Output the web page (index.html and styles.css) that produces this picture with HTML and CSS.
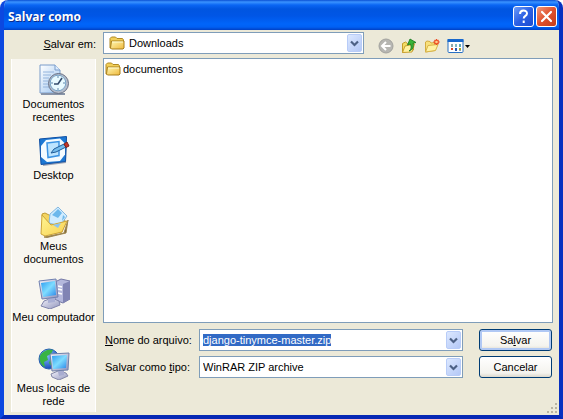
FILE: index.html
```html
<!DOCTYPE html>
<html lang="pt-BR">
<head>
<meta charset="utf-8">
<meta name="viewport" content="width=device-width, initial-scale=1">
<title>Salvar como</title>
<link rel="stylesheet" href="styles.css">
</head>
<body>
<svg class="defs" aria-hidden="true">
  <defs>
    <linearGradient id="gold" x1="0" y1="0" x2="1" y2="1"><stop offset="0" stop-color="#fff9b4"/><stop offset="1" stop-color="#efb83c"/></linearGradient>
    <linearGradient id="yellow" x1="0" y1="0" x2="1" y2="1"><stop offset="0" stop-color="#fff694"/><stop offset="1" stop-color="#f8d050"/></linearGradient>
    <linearGradient id="screen" x1="0" y1="0" x2="1" y2="1"><stop offset="0" stop-color="#2c9cf0"/><stop offset=".5" stop-color="#7fdcff"/><stop offset="1" stop-color="#2a86e8"/></linearGradient>
    <linearGradient id="metal" x1="0" y1="0" x2="1" y2="1"><stop offset="0" stop-color="#f4f4fc"/><stop offset="1" stop-color="#9094bc"/></linearGradient>
    <linearGradient id="paper" x1="0" y1="0" x2="1" y2="1"><stop offset="0" stop-color="#ffffff"/><stop offset="1" stop-color="#9cc4f0"/></linearGradient>
    <radialGradient id="globe" cx=".35" cy=".3" r=".8"><stop offset="0" stop-color="#8cc8ff"/><stop offset="1" stop-color="#0c3cb4"/></radialGradient>
    <symbol id="folder" viewBox="0 0 16 14">
      <path d="M1 12V2.500L2.500 1h4L8 2.500h5.500L14.500 4v8z" fill="#f2cf58" stroke="#b08a24"/>
      <path d="M2.500 5h12.500v7l-1 1H2.500L1.500 12z" fill="url(#gold)" stroke="#a87e1c"/>
      <path d="M3 6h11" stroke="#fffbd0"/>
    </symbol>
    <symbol id="chevron" viewBox="0 0 9 7">
      <path d="M1 1.500l3.500 3.500L8 1.500" fill="none" stroke="#4d6185" stroke-width="2.200"/>
    </symbol>
  </defs>
</svg>
<main class="dialog">
  <header class="titlebar">
    <h1>Salvar como</h1>
    <button class="caption help" type="button" aria-label="Ajuda"><svg viewBox="0 0 19 19"><path d="M6 7c0-4.500 7-4.500 7-.5 0 2.500-3.300 2.300-3.300 5M9.700 13.500v2.500" fill="none" stroke="#fff" stroke-width="2"/></svg></button>
    <button class="caption close" type="button" aria-label="Fechar"><svg viewBox="0 0 19 19"><path d="M5 5l9 9M14 5l-9 9" stroke="#fff" stroke-width="2.200" stroke-linecap="round"/></svg></button>
  </header>
  <form class="content">
    <label class="lookin" for="folder-select"><u>S</u>alvar em:</label>
    <div class="topline">
      <div class="combo location">
        <svg class="folder"><use href="#folder"/></svg>
        <select id="folder-select"><option>Downloads</option></select>
        <span class="arrow"><svg><use href="#chevron"/></svg></span>
      </div>
      <div class="tools">
        <button type="button" aria-label="Voltar"><svg width="16" height="16" viewBox="0 0 16 16"><circle cx="8" cy="8" r="7" fill="#b6b6b2" stroke="#a2a29e"/><path d="M12.500 8H4.500M8 4L4 8l4 4" fill="none" stroke="#fff" stroke-width="2"/></svg></button>
        <button type="button" aria-label="Um nível acima"><svg width="16" height="16" viewBox="0 0 16 16"><path d="M1.500 14.500V5.500l3-1.500 2 1.500 6-1.500v8z" fill="#f4dc64" stroke="#c49c28"/><path d="M1.500 14.500L4 8l9.500-2-2.500 8z" fill="#fff2a0" stroke="#c8a030"/><path d="M8 13c2.500-2 2.500-4 1.500-7L6.500 7 9 1l6 3.500-3 .8c1 3 0 6.700-4 7.700z" fill="#38b438" stroke="#14741c" stroke-width=".8"/></svg></button>
        <button type="button" aria-label="Criar nova pasta"><svg width="16" height="16" viewBox="0 0 16 16"><path d="M1.500 14V4l1.500-1 3 .5 1 1.500 4-.5v8z" fill="#f8e07c" stroke="#d4ac40"/><path d="M1.500 14L4 7.500l10-1-2.500 6z" fill="#fff2a4" stroke="#d8b448"/><path d="M12.500 1v6M9.500 4h6M10.500 2l4 4M14.500 2l-4 4" stroke="#ee4820" stroke-width="1.300"/><circle cx="12.500" cy="4" r="1.300" fill="#ffcc88"/></svg></button>
        <button type="button" aria-label="Menu Exibir"><svg width="23" height="16" viewBox="0 0 23 16"><rect x="1" y="1.500" width="15" height="13" rx="1" fill="#fff" stroke="#2870c4"/><path d="M.5 1h16v3H.5z" fill="#1868cc"/><path d="M4 6h2v3H4zM12 10h2v3h-2z" fill="#90a8a8"/><path d="M8 6h2v3H8z" fill="#80b8c0"/><path d="M12 6h2v3h-2z" fill="#60a8b0"/><path d="M4 10h2v2H4z" fill="#d84828"/><path d="M8 10h2v3H8z" fill="#2858b0"/><path d="M12 10h2v2h-2z" fill="#a8a828"/><path d="M18 7h5l-2.500 3z" fill="#000"/></svg></button>
      </div>
    </div>
    <nav class="places">
      <button type="button">
        <svg viewBox="0 0 32 32"><path d="M2 1h15l5 5v23H2z" fill="url(#paper)" stroke="#7b9cca"/><path d="M17 1v5h5" fill="#dcecff" stroke="#7b9cca"/><path d="M5 8h11M5 11h8M5 14h6M5 17h5M5 20h5M5 23h6" stroke="#94b4dc"/><path d="M3 30h24" stroke="#8894a8" stroke-width="2"/><circle cx="20.500" cy="19.500" r="10" fill="#b4bccc" stroke="#667084"/><circle cx="20" cy="19" r="7.800" fill="#e8faff" stroke="#78a4c8"/><path d="M20 12v2M20 24v2M13 19h2M25 19h2" stroke="#6088ac"/><path d="M24 14l-4 6h-4" fill="none" stroke="#344c6c" stroke-width="1.600"/></svg>
        <span>Documentos<br>recentes</span>
      </button>
      <button type="button">
        <svg viewBox="0 0 32 32"><path d="M4 4l25-2-1 26-23 3z" fill="#9ca4b4"/><path d="M1.500 4l27-2.500-1 25L3 29.500z" fill="#1c78d4" stroke="#1050a4"/><path d="M8 5l14-1.500 5 5v11l-5 6.500L9 27l-6-5V11z" fill="#f4fbff"/><path d="M9 8l12-1.500v14L10 22.500z" fill="#bce4ff" stroke="#3c94e4" stroke-width="1.500"/><path d="M13 18l3-4 10-5 2 3-10 5z" fill="#74bcec" stroke="#205c98"/><path d="M26 9l3-2 2 4-3 1.500z" fill="#c83428" stroke="#7c2018"/></svg>
        <span>Desktop</span>
      </button>
      <button type="button">
        <svg viewBox="0 0 32 32"><path d="M6 31l20-4 4-13-2 13-19 4.500z" fill="#786034" stroke="#a08850"/><path d="M4 8l3-1 6 3 12 0 2 5-3 11-18 3z" fill="#f4d460" stroke="#c09c34"/><path d="M12 8l8-7 9 9-7 10-11-3z" fill="#d0ecff" stroke="#84b8e0"/><path d="M14 9l6-6 4 4-4 5zM25 9l2 2-3 4" fill="#6cb8ec"/><path d="M4 9l9 10 16-4-5 11-17 4-4-2z" fill="url(#yellow)" stroke="#cca438"/><path d="M15 19l5 3 3-5z" fill="#8cc4f0"/></svg>
        <span>Meus<br>documentos</span>
      </button>
      <button type="button">
        <svg viewBox="0 0 32 32"><path d="M17 5l6-3 9 2v18l-7 4-8-3z" fill="#b4b8dc" stroke="#7478a4"/><path d="M25 7l7-3v18l-7 4z" fill="#8084b4"/><path d="M20 9l4 1M20 12l4 1M20 16l4 1" stroke="#fff" stroke-width="1.500"/><path d="M6 24l8-3 7 3 1 4-10 4-9-3z" fill="url(#metal)" stroke="#8084ac"/><path d="M10 18h7v7l-7 1z" fill="#a8aed4"/><path d="M1 4l17-2 2 18-16 2z" fill="url(#metal)" stroke="#7080b0"/><path d="M3 6l14-2 1 14-13 2z" fill="url(#screen)"/></svg>
        <span>Meu computador</span>
      </button>
      <button type="button">
        <svg viewBox="0 0 32 32"><circle cx="11" cy="11" r="10" fill="url(#globe)" stroke="#2860b0"/><path d="M2 8c3-6 9-7 13-6l-2 4-4 2 1 4-4 2 1 5c-4-2-6-6-5-11zM13 10l5-3 2 7-5 6-4-5z" fill="#38b444"/><path d="M13 26l7-3 8 2 2 3-9 4-7-3z" fill="url(#metal)" stroke="#8488a8"/><path d="M19 20h7v7l-5 1z" fill="#a8acd0"/><path d="M12 6l19-1-1 17-16 1z" fill="url(#metal)" stroke="#7080a8"/><path d="M14 8l15-1-1 13-13 1z" fill="url(#screen)"/></svg>
        <span>Meus locais de<br>rede</span>
      </button>
    </nav>
    <ul class="files">
      <li><svg class="folder"><use href="#folder"/></svg>documentos</li>
    </ul>
    <div class="fields">
      <label for="file-name"><u>N</u>ome do arquivo:</label>
      <div class="combo">
        <input id="file-name" type="text" value="django-tinymce-master.zip" spellcheck="false" autocomplete="off">
        <span class="arrow"><svg><use href="#chevron"/></svg></span>
      </div>
      <button class="action primary" type="submit">Sa<u>l</u>var</button>
      <label for="file-type">Salvar como <u>t</u>ipo:</label>
      <div class="combo">
        <select id="file-type"><option>WinRAR ZIP archive</option></select>
        <span class="arrow"><svg><use href="#chevron"/></svg></span>
      </div>
      <button class="action" type="button">Cancelar</button>
    </div>
  </form>
  <svg class="grip" viewBox="0 0 12 12" aria-hidden="true"><path d="M9 1h2v2H9zM5 5h2v2H5zM9 5h2v2H9zM1 9h2v2H1zM5 9h2v2H5zM9 9h2v2H9z" fill="#b8b4a2"/></svg>
</main>
<script src="script.js"></script>
</body>
</html>
```
FILE: styles.css
```css
* {
  box-sizing: border-box;
}

body {
  margin: 0;
  background: #fff;
  color: #000;
  font: 11px/13px "Liberation Sans", Arial, sans-serif;
}

button,
input,
select {
  margin: 0;
  padding: 0;
  border: 0;
  border-radius: 0;
  background: none;
  color: inherit;
  font: inherit;
  outline: 0;
}

svg {
  display: block;
  flex: none;
}

.defs {
  position: absolute;
  width: 0;
  height: 0;
}

.dialog {
  position: relative;
  display: flex;
  flex-direction: column;
  min-height: 100vh;
  border: solid #0c3fd8;
  border-width: 0 4px 4px;
  border-color: #0c3fd8 #0831c0 #0628b4 #0c48e0;
  border-radius: 8px 8px 0 0;
  background: #ece9d8;
  overflow: hidden;
}

.titlebar {
  display: flex;
  align-items: center;
  gap: 2px;
  height: 30px;
  margin: 0 -4px;
  padding: 3px 6px 0 8px;
  background: linear-gradient(#0a50d4 0, #3a93ff 2px, #0a66f4 5px, #0055e0 9px, #0056e6 16px, #0065fa 24px, #0060f4 27px, #0040c4 30px);
}

.titlebar h1 {
  flex: 1;
  margin: 0;
  color: #fff;
  font: bold 12px/16px "Open Sans", "Noto Sans", sans-serif;
  text-shadow: 1px 1px 0 #0c2c8c;
}

.caption {
  width: 21px;
  height: 21px;
  border: 1px solid #fff;
  border-radius: 3px;
}

.caption svg {
  width: 19px;
  height: 19px;
}

.help {
  background: linear-gradient(135deg, #6c9cf8, #2c60e4 50%, #1c4cd0);
}

.close {
  background: linear-gradient(135deg, #f0987c, #e0502c 50%, #c43c18);
}

.content {
  flex: 1;
  display: grid;
  grid-template-columns: 85px minmax(0, 1fr);
  grid-template-rows: 28px minmax(0, 1fr) auto;
  column-gap: 7px;
  padding: 0 6px 3px 7px;
}

.lookin {
  justify-self: end;
  padding-top: 8px;
}

.topline {
  display: flex;
  gap: 14px;
  padding-top: 2px;
}

.combo {
  position: relative;
  height: 22px;
  padding: 1px;
  border: 1px solid #7f9db9;
  background: #fff;
}

.combo input,
.combo select {
  display: block;
  width: 100%;
  height: 100%;
  padding: 0 20px 0 2px;
  appearance: none;
}

.location {
  flex: 0 1 261px;
}

.location select {
  padding-left: 24px;
}

.location .folder {
  position: absolute;
  left: 5px;
  top: 3px;
}

.folder {
  width: 16px;
  height: 14px;
}

.arrow {
  position: absolute;
  top: 1px;
  right: 1px;
  bottom: 1px;
  display: grid;
  place-items: center;
  width: 15px;
  border: 1px solid #b8ccf8;
  border-radius: 2px;
  background: linear-gradient(135deg, #dce8ff, #b4c8f6);
  pointer-events: none;
}

.arrow svg {
  width: 9px;
  height: 7px;
}

.tools {
  display: flex;
  align-items: center;
  gap: 7px;
  padding-top: 2px;
}

.places {
  grid-row: 2 / 4;
  display: flex;
  flex-direction: column;
  margin-top: 1px;
  padding-top: 5px;
  border: solid #fff;
  border-width: 0 1px;
  background: #f8f6f0;
}

.places button {
  display: flex;
  flex-direction: column;
  align-items: center;
  gap: 2px;
  min-height: 71px;
  white-space: nowrap;
}

.places button:last-child {
  min-height: 0;
}

.places svg {
  width: 32px;
  height: 32px;
}

.files {
  margin: 0;
  padding: 2px 1px;
  border: 1px solid #7f9db9;
  background: #fff;
  list-style: none;
}

.files li {
  display: flex;
  align-items: center;
  gap: 2px;
  height: 16px;
}

.fields {
  display: grid;
  grid-template-columns: 94px minmax(0, 1fr) 16px 73px;
  grid-auto-rows: 22px;
  align-items: center;
  row-gap: 5px;
  padding: 6px 1px 34px 2px;
}

.action {
  grid-column: 4;
  height: 22px;
  border: 1px solid #003c74;
  border-radius: 3px;
  background: linear-gradient(#fff, #f4f3ee 80%, #dcd8cc);
}

.primary {
  box-shadow: inset 0 0 0 2px #b0c8f4;
}

.grip {
  position: absolute;
  right: 1px;
  bottom: 1px;
  width: 12px;
  height: 12px;
}

::selection {
  background: #316ac5;
  color: #fff;
}
```
FILE: script.js
```js
const fileName = document.getElementById("file-name");
fileName.focus();
fileName.select();
```
